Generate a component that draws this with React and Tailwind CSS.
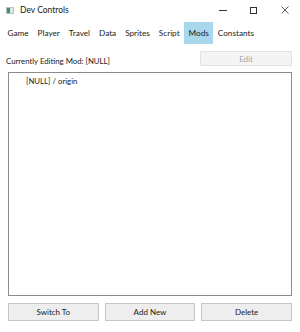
import React from "react"

const menuItems = ["Game", "Player", "Travel", "Data", "Sprites", "Script", "Mods", "Constants"]

const Button = ({ children, disabled, className = "" }) => (
  <button
    className={`flex items-center justify-center border text-[8px] ${
      disabled
        ? "bg-[#f4f4f4] border-[#e3e3e3] text-[#a6a6a6]"
        : "bg-[#eeeeee] border-[#c6c6c6] text-[#222]"
    } ${className}`}
  >
    {children}
  </button>
)

const App = () => {
  return (
    <div
      className="w-[300px] h-[332px] bg-white flex flex-col text-[#1a1a1a] overflow-hidden"
      style={{ fontFamily: 'Lato, "Noto Sans", sans-serif' }}
    >
      {/* Title bar */}
      <div className="h-[20px] flex items-center">
        <svg className="ml-[6px] mr-[6px]" width="8" height="7" viewBox="0 0 8 7">
          <rect x="0" y="0" width="8" height="7" fill="#b9c4c4" />
          <rect x="1" y="1" width="3" height="5" fill="#3f8f7f" />
          <rect x="4" y="1" width="3" height="5" fill="#dfe6e6" />
        </svg>
        <span className="text-[8.5px] leading-none">Dev Controls</span>
        <div className="ml-auto flex items-center h-full">
          <div className="w-[31px] h-full flex items-center justify-center">
            <div className="w-[8px] h-px bg-[#333]" />
          </div>
          <div className="w-[31px] h-full flex items-center justify-center">
            <div className="w-[7px] h-[7px] border border-[#333]" />
          </div>
          <div className="w-[31px] h-full flex items-center justify-center">
            <svg width="8" height="8" viewBox="0 0 8 8">
              <path d="M0.5 0.5 L7.5 7.5 M7.5 0.5 L0.5 7.5" stroke="#333" strokeWidth="0.8" />
            </svg>
          </div>
        </div>
      </div>

      {/* Menu bar */}
      <div className="h-[22px] flex items-stretch pl-[3px] mt-[2px]">
        {menuItems.map(item => (
          <div
            key={item}
            className={`px-[4.5px] flex items-center text-[8.2px] ${
              item === "Mods" ? "bg-[#a9d7ec]" : ""
            }`}
          >
            {item}
          </div>
        ))}
      </div>

      {/* Content */}
      <div className="flex-1 flex flex-col px-[8px] pb-[11px]">
        <div className="flex items-end justify-between mt-[7px]">
          <span className="text-[7.8px] leading-none -ml-[2px]">
            Currently Editing Mod: [NULL]
          </span>
          <Button disabled className="w-[92px] h-[15px]">
            Edit
          </Button>
        </div>

        <div className="flex-1 mt-[6px] border border-[#8c8c8c] pt-[3px] pl-[17px]">
          <div className="text-[7.8px] leading-[11px]">[NULL] / origin</div>
        </div>

        <div className="grid grid-cols-3 gap-[6px] mt-[7px]">
          <Button className="h-[18px]">Switch To</Button>
          <Button className="h-[18px]">Add New</Button>
          <Button className="h-[18px]">Delete</Button>
        </div>
      </div>
    </div>
  )
}

export default App
